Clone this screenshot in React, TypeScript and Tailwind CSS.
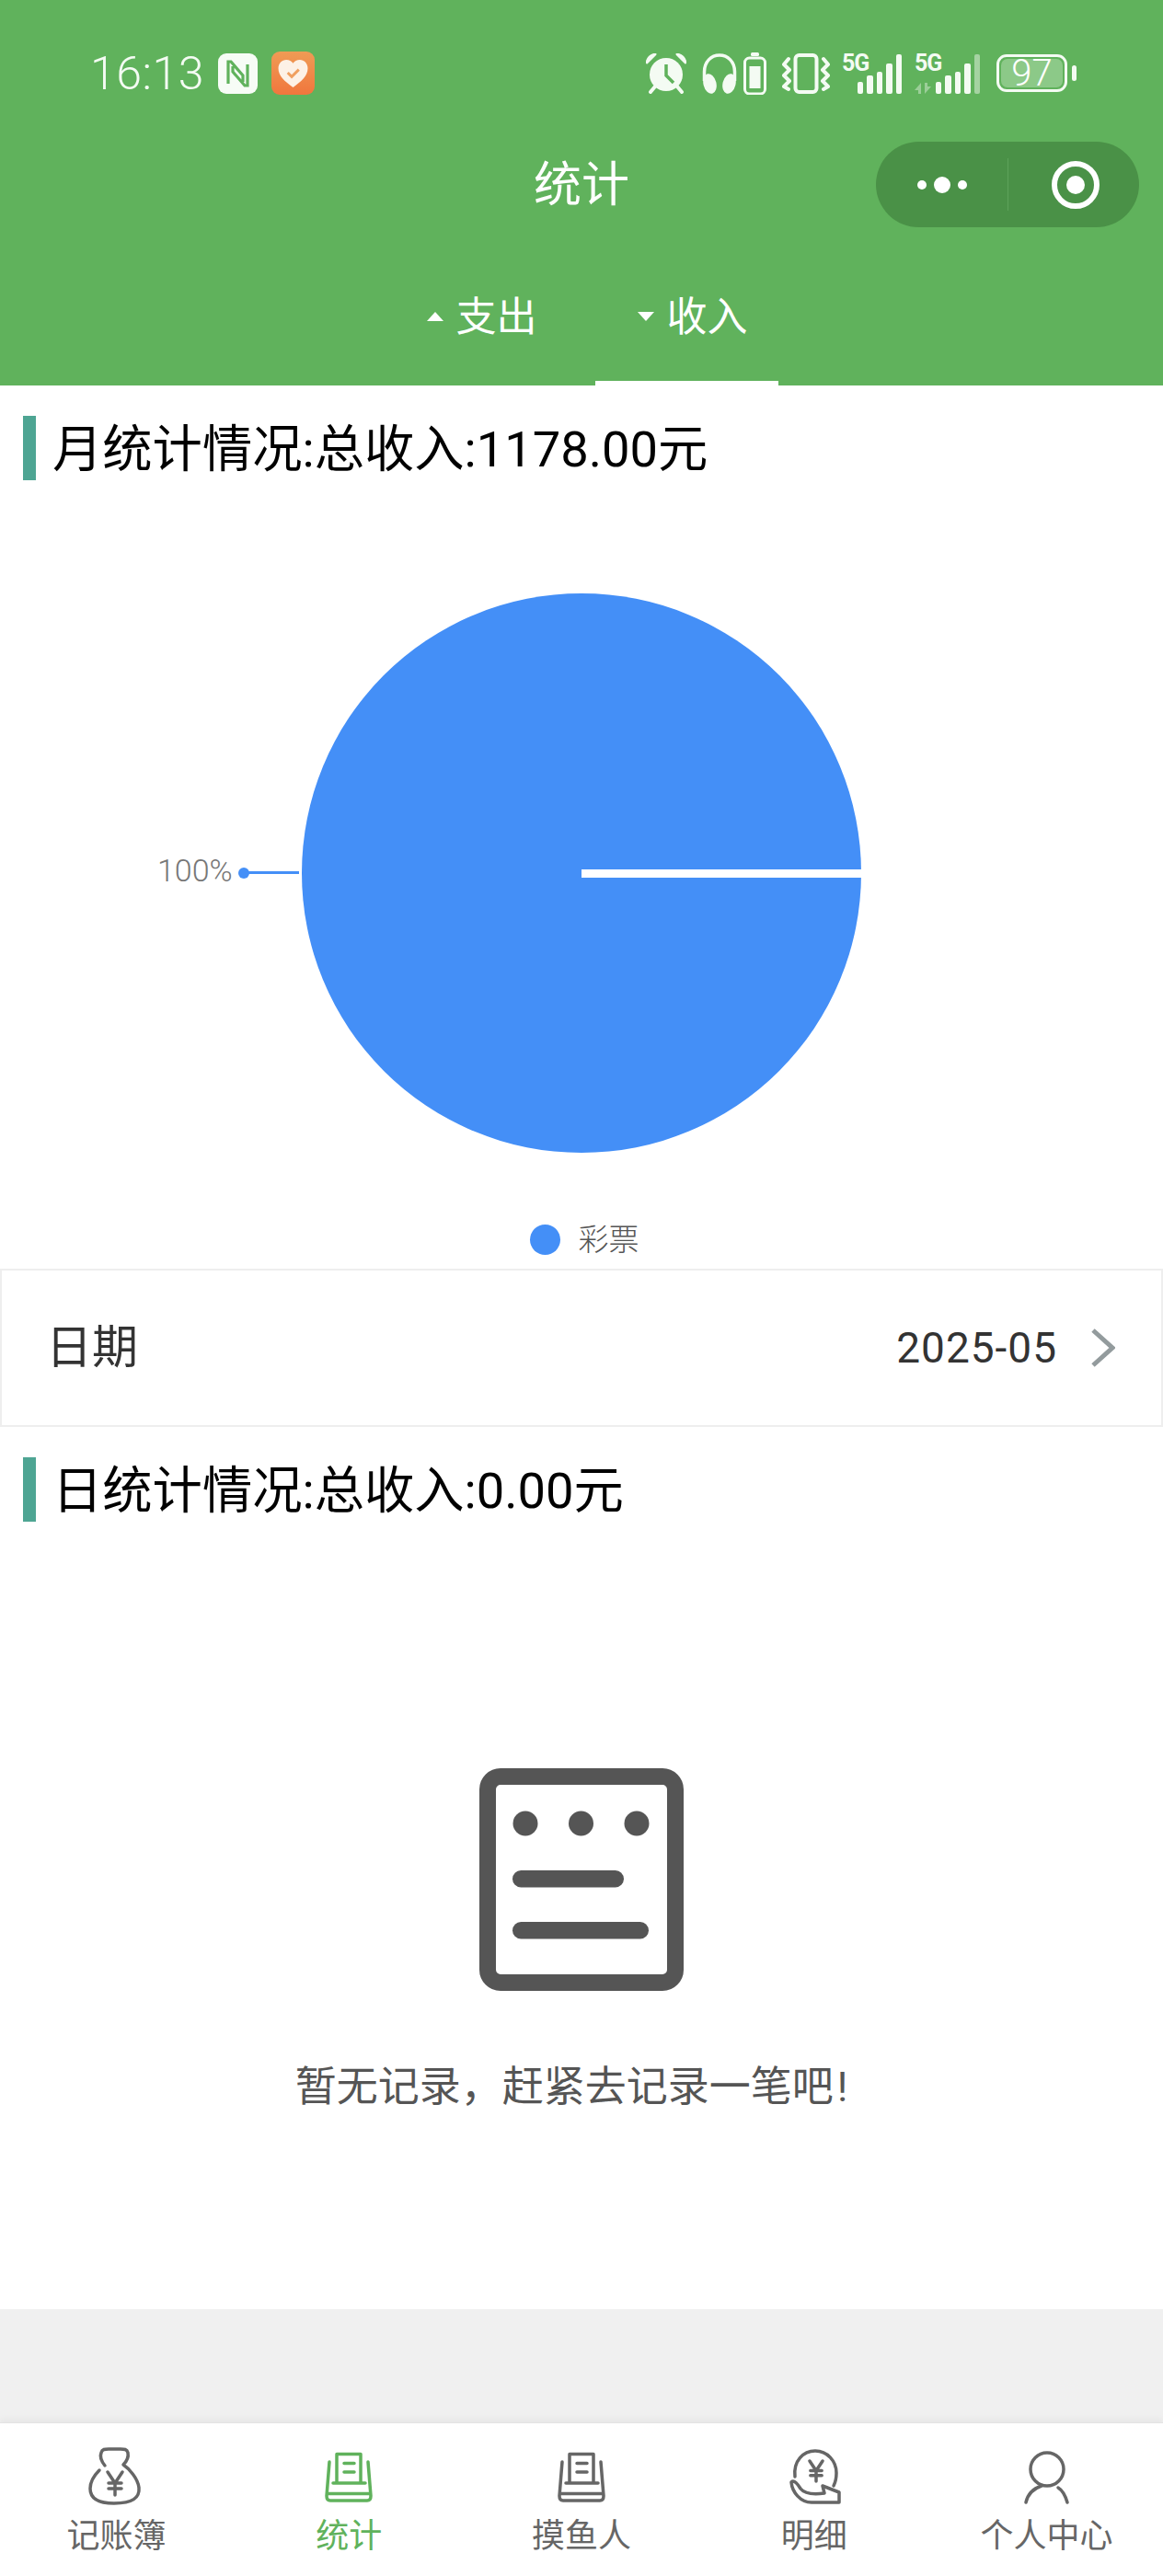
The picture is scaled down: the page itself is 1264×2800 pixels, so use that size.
const font = { fontFamily: 'Roboto, "Noto Sans CJK SC", sans-serif' }

function Alarm() {
  return (
    <svg width="44" height="44" viewBox="0 0 44 44" fill="none">
      <circle cx="22" cy="23" r="18" fill="#f4fbf3" />
      <path d="M22 12v12l8 8" stroke="#60b25c" strokeWidth="3.500" />
      <path d="M1 10C2 5 6 2 10 1L1 10ZM43 10C42 5 38 2 34 1L43 10Z" fill="#f4fbf3" stroke="#f4fbf3" strokeWidth="3" strokeLinejoin="round" />
      <path d="M10 36 5 42M34 36l5 6" stroke="#f4fbf3" strokeWidth="4" strokeLinecap="round" />
    </svg>
  )
}

function Headphones() {
  return (
    <svg width="38" height="44" viewBox="0 0 38 44" fill="none">
      <path d="M2.500 30V20C2.500 9 10 2 19 2s16.500 7 16.500 18v10" stroke="#f4fbf3" strokeWidth="3.500" />
      <ellipse cx="8.500" cy="33" rx="7" ry="11" transform="rotate(-14 8.500 33)" fill="#f4fbf3" />
      <ellipse cx="29.500" cy="33" rx="7" ry="11" transform="rotate(14 29.500 33)" fill="#f4fbf3" />
    </svg>
  )
}

function BatterySaver() {
  return (
    <svg width="25" height="46" viewBox="0 0 25 46" fill="none">
      <rect x="8" y="0" width="9" height="4" rx="1.500" fill="#f4fbf3" />
      <rect x="1.500" y="6" width="22" height="39" rx="5" stroke="#f4fbf3" strokeWidth="3" />
      <rect x="6.500" y="15" width="12" height="24" fill="#f4fbf3" />
    </svg>
  )
}

function Vibrate() {
  return (
    <svg width="52" height="44" viewBox="0 0 52 44" fill="none" stroke="#f4fbf3" strokeWidth="4" strokeLinejoin="round" strokeLinecap="round">
      <rect x="14.500" y="2" width="23" height="40" rx="4" />
      <path d="M7 6 2 12l6 6-6 6 6 6-6 6 5 3M45 6l5 6-6 6 6 6-6 6 6 6-5 3" />
    </svg>
  )
}

// five bars, the last one dimmed on the second sim
function Signal({ dim }: { dim?: boolean }) {
  const heights = [13, 20, 24, 33, 43]
  return (
    <div className="flex items-end gap-[4px] h-[44px]">
      {heights.map((h, i) => (
        <div
          key={i}
          className={dim && i === 4 ? 'w-[6.500px] rounded-[2px] bg-[#a5d3a2]' : 'w-[6.500px] rounded-[2px] bg-[#f4fbf3]'}
          style={{ height: h }}
        />
      ))}
    </div>
  )
}

function Sim({ dim, arrows }: { dim?: boolean; arrows?: boolean }) {
  return (
    <div className="relative flex justify-end h-[44px]" style={{ width: dim ? 71 : 65 }}>
      <span className="absolute left-0 top-[-3px] text-[25px] leading-[28px] font-bold tracking-[-1px] text-[#f4fbf3]" style={font}>5G</span>
      {arrows && (
        <svg className="absolute left-0 bottom-0" width="18" height="12" viewBox="0 0 18 12" fill="#9bce98">
          <path d="M7 0 0 8h4v4h3ZM11 12l7-8h-4V0h-3Z" />
        </svg>
      )}
      <Signal dim={dim} />
    </div>
  )
}

function StatusBar() {
  return (
    <div className="flex items-center justify-between h-[153px] pt-[6px] pl-[98px] pr-[94px]">
      <div className="flex items-center">
        <span className="text-[50px] leading-[56px] font-light text-[#f4fbf3] tracking-[0.5px]" style={font}>16:13</span>
        <svg className="ml-[15px]" width="43" height="44" viewBox="0 0 43 44">
          <rect width="43" height="44" rx="9" fill="#f7fcf6" />
          <path d="M11 33V9H14L27 24V31M32 12V35H29L16 20V14" fill="none" stroke="#60b25c" strokeWidth="3.200" />
        </svg>
        <div className="ml-[15px] w-[47px] h-[47px] rounded-[9px] bg-gradient-to-b from-[#ef9b55] to-[#f0763d] flex items-center justify-center">
          <svg width="33" height="30" viewBox="0 0 33 31">
            <path d="M16.500 31C7 24 0 18 0 9.500 0 4 4 0 9 0c3 0 6 1.500 7.500 4C18 1.500 21 0 24 0c5 0 9 4 9 9.500C33 18 26 24 16.500 31Z" fill="#fdf1e6" />
            <path d="M10.500 14.500 15 19l8-8" fill="none" stroke="#f0a060" strokeWidth="3" />
          </svg>
        </div>
      </div>
      <div className="flex items-center">
        <Alarm />
        <div className="ml-[17px]"><Headphones /></div>
        <div className="ml-[7px]"><BatterySaver /></div>
        <div className="ml-[17px]"><Vibrate /></div>
        <div className="ml-[13px]"><Sim /></div>
        <div className="ml-[14px]"><Sim dim arrows /></div>
        <div className="ml-[18px] flex items-center">
          <div className="w-[77px] h-[41px] rounded-[11px] border-[3px] border-[#f4fbf3] p-[2px] relative">
            <div className="w-full h-full rounded-[7px] bg-[#8cc988]" />
            <span className="absolute inset-0 flex items-center justify-center text-[40px] leading-none font-light text-white" style={font}>97</span>
          </div>
          <div className="ml-[5px] w-[5px] h-[17px] rounded-[3px] bg-[#f4fbf3]" />
        </div>
      </div>
    </div>
  )
}

function NavBar() {
  return (
    <div className="grid grid-cols-[1fr_auto_1fr] items-center h-[93px] px-[26px]">
      <div />
      <div className="text-[52px] leading-[93px] pt-[2px] text-white" style={font}>统计</div>
      <div className="justify-self-end flex items-center w-[286px] h-[93px] rounded-full bg-[#4a9147]">
        <div className="flex-1 flex items-center justify-center gap-[8px]">
          <div className="w-[10px] h-[10px] rounded-full bg-white" />
          <div className="w-[18px] h-[18px] rounded-full bg-white" />
          <div className="w-[10px] h-[10px] rounded-full bg-white" />
        </div>
        <div className="w-px h-[57px] bg-[#5da25a]" />
        <div className="w-[142px] pl-[3px] flex items-center justify-center">
          <div className="w-[52px] h-[52px] rounded-full border-[6px] border-white flex items-center justify-center">
            <div className="w-[20px] h-[20px] rounded-full bg-white" />
          </div>
        </div>
      </div>
    </div>
  )
}

function Tabs() {
  return (
    <div className="flex justify-center gap-[30px] h-[173px] pt-[72px]">
      <div className="w-[199px] h-[101px] flex items-start justify-center gap-[14px] pl-[12px]">
        <svg className="mt-[21px]" width="18" height="10" viewBox="0 0 18 10"><path d="M9 0 18 10H0Z" fill="#fff" /></svg>
        <span className="text-[44px] leading-[54px] text-white" style={font}>支出</span>
      </div>
      <div className="w-[199px] h-[101px] flex items-start justify-center gap-[14px] pl-[12px] border-b-[5px] border-white">
        <svg className="mt-[21px]" width="18" height="10" viewBox="0 0 18 10"><path d="M0 0H18L9 10Z" fill="#fff" /></svg>
        <span className="text-[44px] leading-[54px] text-white" style={font}>收入</span>
      </div>
    </div>
  )
}

function Heading({ text }: { text: string }) {
  return (
    <div className="flex items-center h-[70px] mt-[33px] ml-[25px]">
      <div className="w-[14px] h-[70px] bg-[#4ea593]" />
      <h2 className="ml-[18px] pt-[3px] text-[54.300px] leading-[70px] text-black" style={font}>{text}</h2>
    </div>
  )
}

function Pie() {
  return (
    <svg className="block" width="1264" height="809" viewBox="0 0 1264 809">
      <circle cx="632" cy="427" r="304" fill="#448ff7" />
      <rect x="632" y="423" width="304" height="9" fill="#fff" />
      <circle cx="265" cy="427" r="6" fill="#448ff7" />
      <rect x="265" y="425" width="60" height="3" fill="#448ff7" />
      <text x="171" y="436" fontSize="34" fontWeight="300" fill="#777" style={font}>100%</text>
    </svg>
  )
}

function DateRow() {
  return (
    <div className="flex items-center h-[172px] mt-[15px] border-2 border-[#eeeeee] pl-[48px] pr-[50px]">
      <span className="text-[50px] text-[#333]" style={font}>日期</span>
      <span className="ml-auto text-[46px] text-[#333] tracking-[1px]" style={font}>2025-05</span>
      <svg className="ml-[36px]" width="27" height="44" viewBox="0 0 27 44" fill="none">
        <path d="M3 3 24 22 3 41" stroke="#939b9d" strokeWidth="5" />
      </svg>
    </div>
  )
}

function EmptyState() {
  return (
    <div className="flex flex-col items-center pt-[268px]">
      <svg width="222" height="242" viewBox="0 0 222 242">
        <rect x="9" y="9" width="204" height="224" rx="14" fill="none" stroke="#555" strokeWidth="18" />
        <circle cx="50" cy="60" r="13.500" fill="#555" />
        <circle cx="110.500" cy="60" r="13.500" fill="#555" />
        <circle cx="171" cy="60" r="13.500" fill="#555" />
        <rect x="36" y="111" width="121" height="18.500" rx="9.250" fill="#555" />
        <rect x="36" y="167" width="148" height="18.500" rx="9.250" fill="#555" />
      </svg>
      <p className="mt-[75px] -ml-[22px] text-[45px] leading-[60px] text-[#555]" style={font}>暂无记录，赶紧去记录一笔吧<span className="ml-[4px]">!</span></p>
    </div>
  )
}

function Yen({ x, y, s = 1 }: { x: number; y: number; s?: number }) {
  const k = 12 * s
  return <path d={`M${x - 8 * s} ${y}L${x} ${y + k}L${x + 8 * s} ${y}M${x} ${y + k}V${y + 25 * s}M${x - 7 * s} ${y + k}H${x + 7 * s}M${x - 7 * s} ${y + 18 * s}H${x + 7 * s}`} />
}

function BookIcon({ color }: { color: string }) {
  return (
    <svg width="64" height="64" viewBox="0 0 64 64" fill="none" stroke={color} strokeWidth="3.500" strokeLinecap="round" strokeLinejoin="round">
      <path d="M19 40V8.500H45V40M15 40H50M27 18.500H38M27 28H38" />
      <path d="M11 17 8 54Q8 59 12 59H52Q56 59 56 54L53 17M9 51.500H55" />
    </svg>
  )
}

const tabs = [
  {
    label: '记账簿',
    icon: (
      <svg width="64" height="64" viewBox="0 0 64 64" fill="none" stroke="#666" strokeWidth="3.500" strokeLinecap="round" strokeLinejoin="round">
        <path d="M20 21C16 16 14 12 16 7 17 3 20 3 24 3H37C41 3 44 3 45 7 46 12 44 16 40 20 46 24 56 35 57 45 58 56 50 62 30 62 12 62 4 56 4 46 4 37 10 30 14 26" />
        <Yen x={31} y={28} />
      </svg>
    ),
  },
  { label: '统计', active: true, icon: <BookIcon color="#60b25c" /> },
  { label: '摸鱼人', icon: <BookIcon color="#666" /> },
  {
    label: '明细',
    icon: (
      <svg width="64" height="64" viewBox="0 0 64 64" fill="none" stroke="#666" strokeWidth="3.500" strokeLinecap="round" strokeLinejoin="round">
        <path d="M11 33C9 16 20 5 33 5S56 16 56 29C56 34 55 39 53 43" />
        <path d="M7 39C10 36 14 41 17 46 21 51 29 53 43 51L41 43 59 50V61H29C17 61 8 50 7 39Z" />
        <Yen x={34} y={16} s={0.88} />
      </svg>
    ),
  },
  {
    label: '个人中心',
    icon: (
      <svg width="64" height="64" viewBox="0 0 64 64" fill="none" stroke="#666" strokeWidth="3.500" strokeLinecap="round">
        <circle cx="32" cy="25" r="18" />
        <path d="M9 61C11 52 17 46 26 43M44 45C49 48 52 54 54 61" />
      </svg>
    ),
  },
]

function TabBar() {
  return (
    <div className="grid grid-cols-5 h-[167px] bg-white border-t border-[#e3e3e3] shadow-[0_-4px_6px_rgba(0,0,0,0.04)]">
      {tabs.map((t) => (
        <div key={t.label} className="flex flex-col items-center pt-[25px]">
          {t.icon}
          <span className={t.active ? 'mt-[9px] text-[36px] leading-[50px] text-[#60b25c]' : 'mt-[9px] text-[36px] leading-[50px] text-[#666]'} style={font}>{t.label}</span>
        </div>
      ))}
    </div>
  )
}

export default function App() {
  return (
    <div className="flex flex-col h-[2800px] bg-[#f0f0f0]" style={font}>
      <header className="bg-[#60b25c]">
        <StatusBar />
        <NavBar />
        <Tabs />
      </header>
      <main className="h-[2091px] bg-white">
        <Heading text="月统计情况:总收入:1178.00元" />
        <Pie />
        <div className="flex items-center justify-center h-[33px] pl-[6px]">
          <div className="w-[33px] h-[33px] rounded-full bg-[#448ff7]" />
          <span className="ml-[20px] text-[33px] font-light text-[#555]" style={font}>彩票</span>
        </div>
        <DateRow />
        <Heading text="日统计情况:总收入:0.00元" />
        <EmptyState />
      </main>
      <div className="flex-1" />
      <TabBar />
    </div>
  )
}
